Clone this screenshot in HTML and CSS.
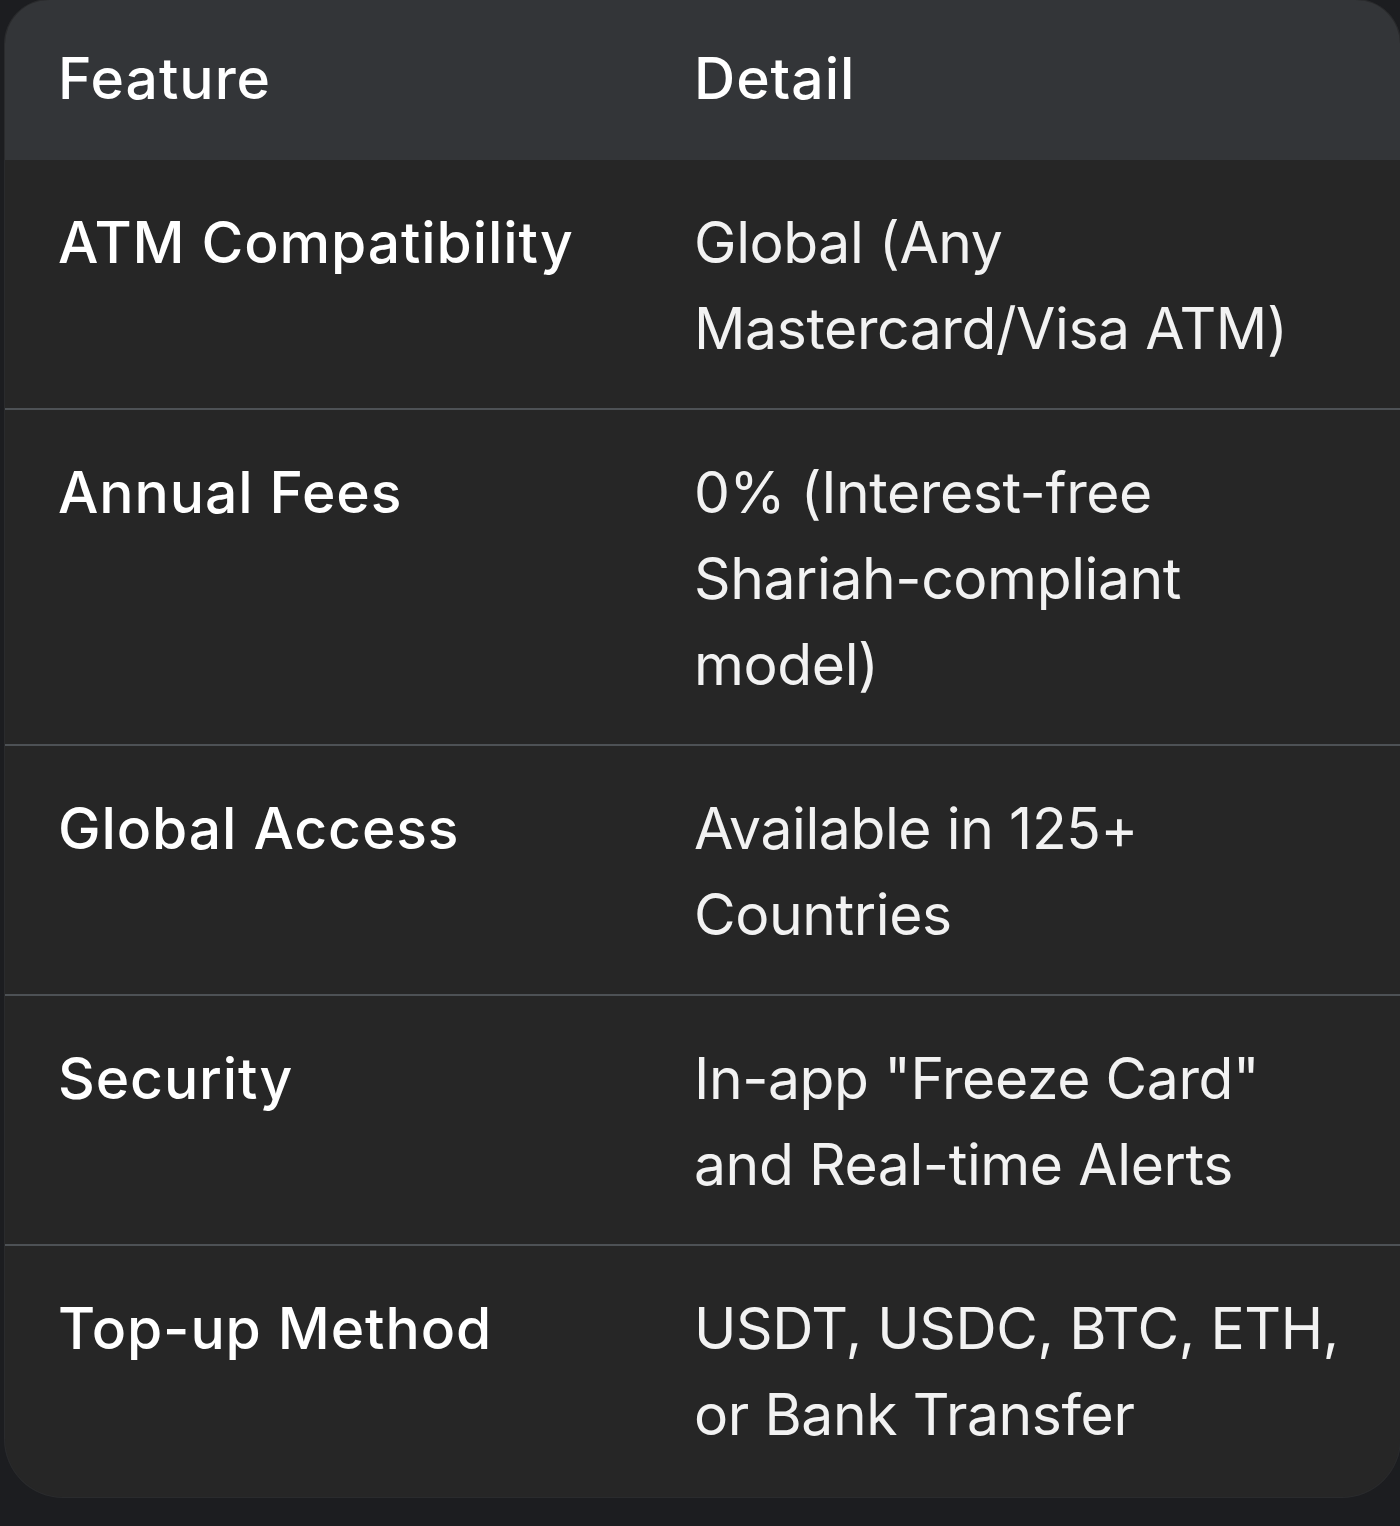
FILE: index.html
```html
<!DOCTYPE html>
<html lang="en">
<head>
<meta charset="utf-8">
<title>Card features</title>
<link rel="stylesheet" href="styles.css">
</head>
<body>
<div class="card">
  <table class="features">
    <thead>
      <tr>
        <th class="col-feature">Feature</th>
        <th class="col-detail">Detail</th>
      </tr>
    </thead>
    <tbody>
      <tr>
        <td class="feature">ATM Compatibility</td>
        <td class="detail">Global (Any Mastercard/Visa ATM)</td>
      </tr>
      <tr>
        <td class="feature">Annual Fees</td>
        <td class="detail">0% (Interest-free Shariah-compliant model)</td>
      </tr>
      <tr>
        <td class="feature">Global Access</td>
        <td class="detail">Available in 125+ Countries</td>
      </tr>
      <tr>
        <td class="feature">Security</td>
        <td class="detail">In-app "Freeze Card" and Real-time Alerts</td>
      </tr>
      <tr>
        <td class="feature">Top-up Method</td>
        <td class="detail">USDT, USDC, BTC, ETH, or Bank Transfer</td>
      </tr>
    </tbody>
  </table>
</div>
</body>
</html>
```

FILE: styles.css
```css
html, body {
  margin: 0;
  padding: 0;
}

body {
  background: #1c1d20;
  width: 1400px;
  height: 1526px;
  overflow: hidden;
  font-family: Inter, Roboto, "Noto Sans", "Liberation Sans", sans-serif;
  color: #f4f4f4;
}

.card {
  margin-left: 5px;
  width: 1395px;
  height: 1497px;
  background: #262626;
  border-radius: 44px 44px 58px 58px;
  overflow: hidden;
  box-shadow: 0 0 0 1px #2a2b2d;
}

.features {
  width: 100%;
  border-collapse: collapse;
  table-layout: fixed;
}

.features th,
.features td {
  box-sizing: border-box;
  text-align: left;
  vertical-align: top;
  font-size: 57px;
  line-height: 86px;
  padding-left: 53px;
  padding-right: 50px;
}

.col-feature {
  width: 636px;
}

.features th {
  background: #333538;
  font-weight: 500;
  color: #ffffff;
  letter-spacing: 1px;
  padding-top: 36px;
  padding-bottom: 38px;
}

.features td {
  padding-top: 40px;
  padding-bottom: 36px;
}

.features tbody tr + tr td {
  border-top: 2px solid #4d5155;
}

.feature {
  font-weight: 500;
  color: #ffffff;
  letter-spacing: 0.9px;
}

.detail {
  font-weight: 400;
  color: #f2f2f2;
  letter-spacing: -0.4px;
}
```
